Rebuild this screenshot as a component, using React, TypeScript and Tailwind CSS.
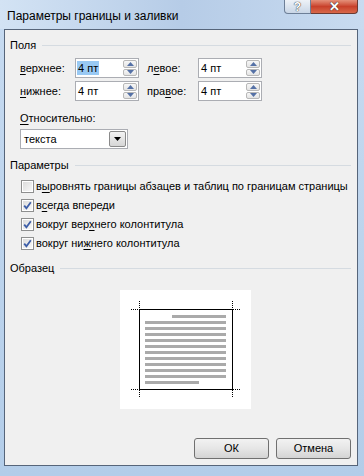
import React from "react";

const ui = { fontFamily: '"Liberation Sans", Arial, sans-serif' };

function Key({ text, k }: { text: string; k: number }) {
  // underline the access-key letter at index k
  return (
    <span>
      {text.slice(0, k)}
      <span className="underline underline-offset-2">{text[k]}</span>
      {text.slice(k + 1)}
    </span>
  );
}

function GroupHeader({ label }: { label: string }) {
  return (
    <div className="flex items-center h-[14px] pl-[5px] pr-[6px] gap-[6px]">
      <span>{label}</span>
      <div className="flex-1 h-px bg-[#d5dbe1]" />
    </div>
  );
}

function Spin({ selected }: { selected?: boolean }) {
  return (
    <div className="flex w-[64px] h-[20px] border border-[#abadb3] bg-white">
      <div className="flex-1 flex items-center pl-[1px]">
        <span className={selected ? "bg-[#99c9f3] px-[1px] leading-[14px]" : "px-[1px]"}>4 пт</span>
      </div>
      <div className="flex flex-col w-[16px] gap-px p-px">
        <div className="flex-1 flex items-center justify-center border border-[#b8b8b8] rounded-[2px] bg-gradient-to-b from-[#f7f7f7] to-[#e4e4e4]">
          <svg width="7" height="4" viewBox="0 0 7 4">
            <path d="M0 4 L3.5 0 L7 4 Z" fill="#5571a6" />
          </svg>
        </div>
        <div className="flex-1 flex items-center justify-center border border-[#b8b8b8] rounded-[2px] bg-gradient-to-b from-[#f7f7f7] to-[#e4e4e4]">
          <svg width="7" height="4" viewBox="0 0 7 4">
            <path d="M0 0 L3.5 4 L7 0 Z" fill="#5571a6" />
          </svg>
        </div>
      </div>
    </div>
  );
}

function Check({ checked, text, k }: { checked: boolean; text: string; k: number }) {
  return (
    <div className="flex items-center h-[19px] pl-[16px] gap-[2px]">
      <div className="w-[13px] h-[13px] border border-[#8e8f8f] bg-white p-px">
        <div className="w-full h-full bg-gradient-to-br from-[#dcdcdc] to-[#f8f8f8] flex items-center justify-center">
          {checked && (
            <svg width="9" height="9" viewBox="0 0 9 9">
              <path d="M1.2 4.6 L3.4 7.2 L7.8 1.2" fill="none" stroke="#3d5ea8" strokeWidth="1.8" />
            </svg>
          )}
        </div>
      </div>
      <Key text={text} k={k} />
    </div>
  );
}

function Preview() {
  const lines = Array.from({ length: 12 }, (_, i) => i);
  return (
    <div className="ml-[115px] mt-[15px] w-[131px] h-[119px] bg-white">
      <svg width="131" height="119" viewBox="0 0 131 119">
        {lines.map((i) => (
          <rect
            key={i}
            x={i === 0 ? 52 : 25}
            y={25 + i * 6}
            width={i === 0 ? 54 : i === 11 ? 54 : 81}
            height={3}
            fill="#aaaaaa"
          />
        ))}
        <rect x="19.5" y="19.5" width="93" height="80" fill="none" stroke="#000" strokeWidth="1" />
        <g stroke="#000" strokeWidth="1" strokeDasharray="1 1" fill="none">
          <path d="M11 19.5 H19" />
          <path d="M19.5 11 V19" />
          <path d="M113 19.5 H121" />
          <path d="M112.5 11 V19" />
          <path d="M11 99.5 H19" />
          <path d="M19.5 100 V108" />
          <path d="M113 99.5 H121" />
          <path d="M112.5 100 V108" />
        </g>
      </svg>
    </div>
  );
}

function Button({ label }: { label: string }) {
  return (
    <div className="w-[75px] h-[21px] flex items-center justify-center rounded-[3px] border border-[#707070] bg-gradient-to-b from-[#f2f2f2] via-[#e6e6e6] to-[#d4d4d4]">
      {label}
    </div>
  );
}

export default function App() {
  return (
    <div
      className="w-[364px] h-[476px] flex flex-col bg-gradient-to-b from-[#c7dbf1] to-[#b3cde9] text-[11px] text-black overflow-hidden"
      style={ui}
    >
      {/* Title bar */}
      <div className="h-[29px] flex justify-between bg-gradient-to-r from-[#d3e3f4] via-[#b6cce7] to-[#c8dbf0]">
        <div className="pl-[7px] pt-[9px] text-[12px] leading-[15px]">
          Параметры границы и заливки
        </div>
        <div className="flex items-start mr-[6px]">
          <div className="w-[27px] h-[14px] flex items-center justify-center rounded-bl-[4px] border border-t-0 border-[#6d7f97] bg-gradient-to-b from-[#eef2f7] to-[#c9d6e6]">
            <span className="text-white font-bold text-[12px] leading-[12px] [text-shadow:0_0_1px_#333,0_0_1px_#333]">?</span>
          </div>
          <div className="w-[47px] h-[14px] flex items-center justify-center rounded-br-[4px] border border-t-0 border-l-0 border-[#6b3a32] bg-gradient-to-b from-[#e4907a] via-[#c8402a] to-[#d8684a]">
            <span className="text-white font-bold text-[13px] leading-[12px] [text-shadow:0_0_1px_#333,0_0_1px_#333]">✕</span>
          </div>
        </div>
      </div>

      {/* Client area */}
      <div className="flex-1 flex">
        <div className="w-[4px]" />
        <div className="w-[354px] flex flex-col border border-[#56657a] bg-[#f0f0f0]">
          <div className="mt-[8px]">
            <GroupHeader label="Поля" />
          </div>

          <div className="flex items-center mt-[6px] pl-[15px] h-[20px]">
            <div className="w-[55px]"><Key text="верхнее:" k={0} /></div>
            <Spin selected />
            <div className="w-[51px] ml-[8px]"><Key text="левое:" k={1} /></div>
            <Spin />
          </div>
          <div className="flex items-center mt-[3px] pl-[15px] h-[20px]">
            <div className="w-[55px]"><Key text="нижнее:" k={0} /></div>
            <Spin />
            <div className="w-[51px] ml-[8px]"><Key text="правое:" k={3} /></div>
            <Spin />
          </div>

          <div className="mt-[10px] pl-[15px] h-[14px] leading-[14px]">
            <Key text="Относительно:" k={0} />
          </div>
          <div className="mt-[4px] ml-[15px] w-[108px] h-[20px] flex border border-[#abadb3] bg-white">
            <div className="flex-1 flex items-center pl-[3px]">текста</div>
            <div className="w-[17px] m-px flex items-center justify-center border border-[#8a8a8a] rounded-[2px] bg-gradient-to-b from-[#f3f3f3] to-[#d6d6d6]">
              <svg width="7" height="4" viewBox="0 0 7 4">
                <path d="M0 0 L7 0 L3.5 4 Z" fill="#000" />
              </svg>
            </div>
          </div>

          <div className="mt-[9px]">
            <GroupHeader label="Параметры" />
          </div>
          <div className="mt-[5px] flex flex-col">
            <Check checked={false} text="выровнять границы абзацев и таблиц по границам страницы" k={1} />
            <Check checked text="всегда впереди" k={1} />
            <Check checked text="вокруг верхнего колонтитула" k={10} />
            <Check checked text="вокруг нижнего колонтитула" k={9} />
          </div>

          <div className="mt-[8px]">
            <GroupHeader label="Образец" />
          </div>
          <Preview />

          <div className="mt-auto mb-[6px] mr-[6px] flex justify-end gap-[7px]">
            <Button label="ОК" />
            <Button label="Отмена" />
          </div>
        </div>
        <div className="flex-1" />
      </div>
      <div className="h-[10px]" />
    </div>
  );
}
